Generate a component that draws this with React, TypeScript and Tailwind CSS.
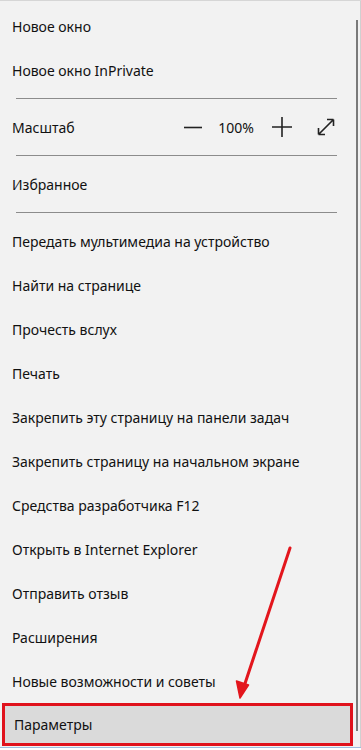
import { Fragment } from "react";

const groups: string[][] = [
  ["Новое окно", "Новое окно InPrivate"],
  ["__zoom"],
  ["Избранное"],
  [
    "Передать мультимедиа на устройство",
    "Найти на странице",
    "Прочесть вслух",
    "Печать",
    "Закрепить эту страницу на панели задач",
    "Закрепить страницу на начальном экране",
    "Средства разработчика F12",
    "Открыть в Internet Explorer",
    "Отправить отзыв",
    "Расширения",
    "Новые возможности и советы",
  ],
];

function ZoomRow() {
  return (
    <div className="h-[44px] flex items-center pl-[12px]">
      <span className="flex-1">Масштаб</span>
      {/* минус */}
      <svg width="20" height="20" viewBox="0 0 20 20" className="mr-[13px]">
        <path d="M1 10.5H19" stroke="#222" strokeWidth="1.6" />
      </svg>
      <span className="w-[40px] text-center mr-[15px]">100%</span>
      {/* плюс */}
      <svg width="22" height="22" viewBox="0 0 22 22" className="mr-[23px]">
        <path d="M1 11H21M11 1V21" stroke="#222" strokeWidth="1.6" />
      </svg>
      {/* развернуть */}
      <svg width="20" height="20" viewBox="0 0 20 20" className="mr-[17px]">
        <path
          d="M2.5 17.5L17.5 2.5M2.5 17.5V11M2.5 17.5H9M17.5 2.5H11M17.5 2.5V9"
          stroke="#222"
          strokeWidth="1.6"
          fill="none"
        />
      </svg>
    </div>
  );
}

export default function App() {
  return (
    <div
      className="relative w-[361px] h-[750px] overflow-hidden bg-[#f2f2f2] border-t border-[#d6d6d6] text-[14px] text-[#111]"
      style={{ fontFamily: '"Noto Sans", "Liberation Sans", sans-serif' }}
    >
      <div className="pt-[3px] pr-[8px]">
        {groups.map((g, gi) => (
          <Fragment key={gi}>
            {gi > 0 && (
              <div className="h-[13px] flex items-center px-[16px]">
                <div className="w-full h-px bg-[#8c8c8c]" />
              </div>
            )}
            {g.map((item) =>
              item === "__zoom" ? (
                <ZoomRow key={item} />
              ) : (
                <div key={item} className="h-[44px] flex items-center pl-[12px]">
                  {item}
                </div>
              )
            )}
          </Fragment>
        ))}
        {/* Параметры — выделено */}
        <div className="ml-[2px] w-[351px] h-[43px] flex items-center pl-[9px] bg-[#dadada] border-[3px] border-[#e0121c]">
          Параметры
        </div>
      </div>

      {/* полоса прокрутки */}
      <div className="absolute right-[3px] top-[19px] h-[711px] w-[2px] bg-[#7a7a7a]" />
      <div className="absolute right-0 top-0 h-full w-px bg-[#d0d0d0]" />
      <div className="absolute left-0 bottom-[2px] w-full h-px bg-[#9dbde0]" />
      <div className="absolute left-0 bottom-0 w-full h-[2px] bg-white" />

      {/* красная стрелка */}
      <svg className="absolute left-0 top-0" width="361" height="750" viewBox="0 0 361 750">
        <path d="M290 547L244.5 684" stroke="#e3161d" strokeWidth="3" strokeLinecap="round" />
        <path d="M240 697L236.5 680L248.5 684Z" fill="#e3161d" stroke="#e3161d" strokeWidth="1.5" strokeLinejoin="round" />
      </svg>
    </div>
  );
}
